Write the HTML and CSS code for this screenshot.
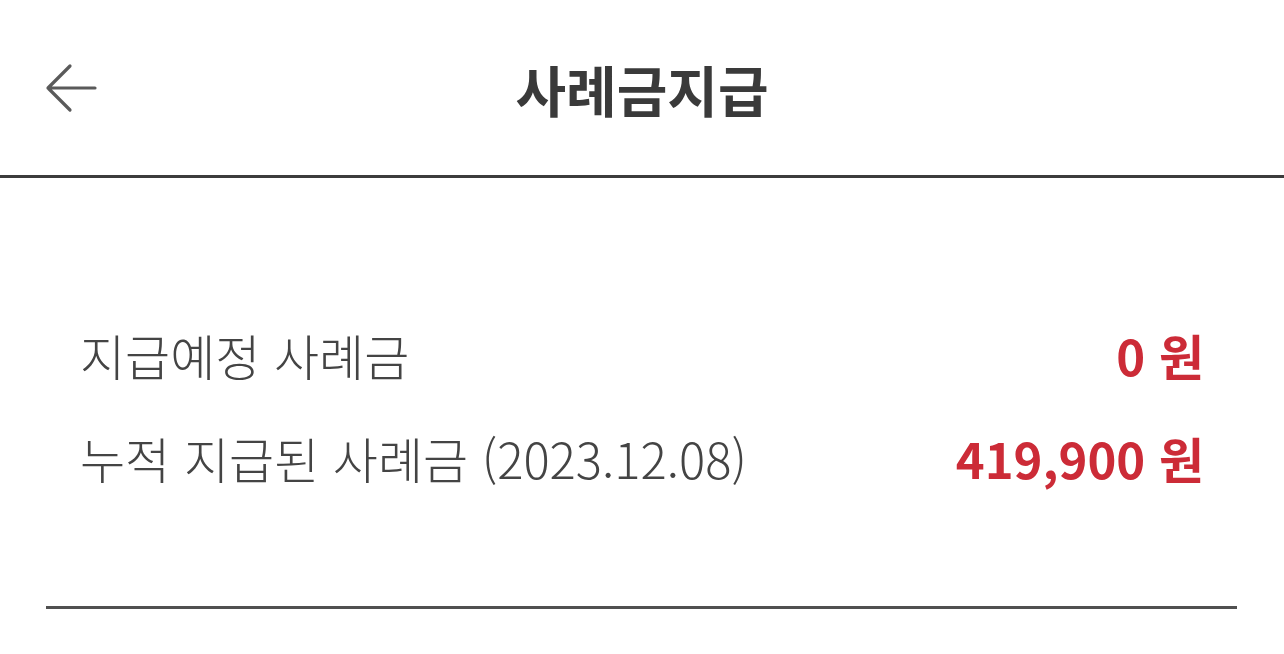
FILE: index.html
```html
<!DOCTYPE html>
<html lang="ko">
<head>
    <meta charset="UTF-8">
    <meta name="viewport" content="width=device-width, initial-scale=1.0">
    <title>사례금지급</title>
    <link rel="stylesheet" href="styles.css">
</head>
<body>
    <header class="topbar">
        <button class="back" aria-label="뒤로">
            <svg width="54" height="50" viewBox="0 0 54 50">
                <path d="M26 3 L4 25 L26 47 M4 25 H51" fill="none" stroke="#5a5a5a" stroke-width="3.2" stroke-linecap="round" stroke-linejoin="round"/>
            </svg>
        </button>
        <h1 class="title">사례금지급</h1>
    </header>

    <main class="content">
        <ul class="summary">
            <li class="row">
                <span class="label">지급예정 사례금</span>
                <span class="amount">0 원</span>
            </li>
            <li class="row">
                <span class="label">누적 지급된 사례금 (2023.12.08)</span>
                <span class="amount">419,900 원</span>
            </li>
        </ul>
    </main>
</body>
</html>
```

FILE: styles.css
```css
body {
    margin: 0;
    font-family: "Noto Sans CJK KR", "Noto Sans", sans-serif;
    color: #3d3d3d;
    background-color: #fff;
}
.topbar {
    position: relative;
    height: 175px;
    border-bottom: 3px solid #3c3c3c;
    display: flex;
    align-items: center;
    justify-content: center;
}
.back {
    position: absolute;
    left: 44px;
    top: 63px;
    padding: 0;
    border: 0;
    background: none;
    line-height: 0;
}
.title {
    margin: 0;
    font-size: 55px;
    font-weight: 700;
    color: #3a3a3a;
    line-height: 1;
    padding-top: 2px;
}
.content {
    padding: 0 47px 0 46px;
}
.summary {
    list-style: none;
    margin: 0;
    padding: 125px 33px 97px 34px;
    border-bottom: 3px solid #505050;
}
.row {
    display: flex;
    justify-content: space-between;
    align-items: center;
    height: 103px;
}
.label {
    font-size: 49px;
    font-weight: 300;
    color: #444;
}
.amount {
    font-size: 49px;
    font-weight: 700;
    color: #cc2b37;
}
```
